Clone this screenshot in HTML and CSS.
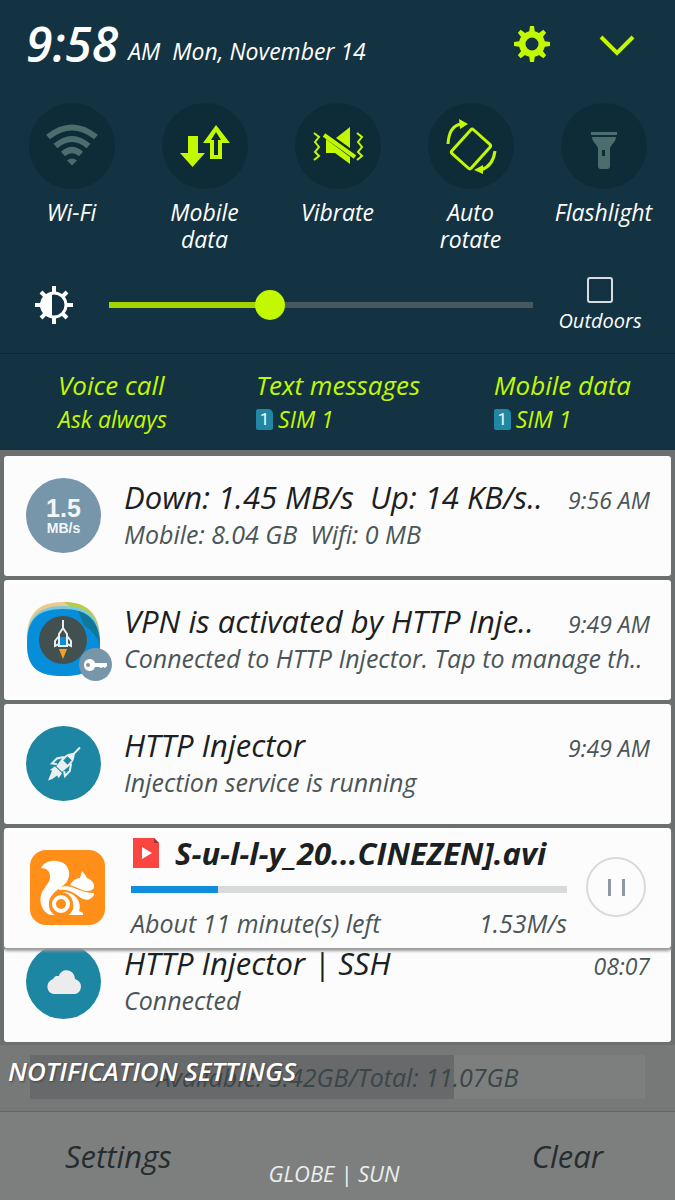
FILE: index.html
```html
<!DOCTYPE html>
<html lang="en">
<head>
    <meta charset="UTF-8">
    <meta name="viewport" content="width=device-width, initial-scale=1.0">
    <title>Notifications</title>
    <link rel="stylesheet" href="styles.css">
</head>
<body>

    <header class="panel">
        <div class="status">
            <span class="clock">9:58</span>
            <span class="date">AM&nbsp; Mon, November 14</span>
            <button class="icon-btn" aria-label="Settings">
                <svg width="38" height="38" viewBox="0 0 38 38" fill="#c2f900"><path fill-rule="evenodd" d="M19 6a13 13 0 1 1 0 26a13 13 0 1 1 0-26M19 12.500a6.500 6.500 0 1 0 0 13a6.500 6.500 0 1 0 0-13"/><path d="M16 8l1-7h4l1 7zM16 30l1 7h4l1-7zM8 16l-7 1v4l7 1zM30 16l7 1v4l-7 1z"/><path transform="rotate(45 19 19)" d="M16 8l1-7h4l1 7zM16 30l1 7h4l1-7zM8 16l-7 1v4l7 1zM30 16l7 1v4l-7 1z"/></svg>
            </button>
            <button class="icon-btn" aria-label="Expand">
                <svg width="36" height="22" viewBox="0 0 36 22" fill="none" stroke="#c2f900" stroke-width="4"><path d="M2 4l16 16L34 4"/></svg>
            </button>
        </div>

        <div class="toggles">
            <button class="toggle">
                <span class="disc"><svg width="54" height="44" viewBox="0 0 54 44" fill="none" stroke="#4b6d6e" stroke-width="6"><path d="M3 13Q27-6 51 13M10.500 22Q27 8 43.500 22M18 30Q27 22 36 30"/><path d="M22 36.500q5-4 10 0l-5 5z" fill="#4b6d6e" stroke="none"/></svg></span>
                Wi-Fi
            </button>
            <button class="toggle">
                <span class="disc"><svg width="52" height="44" viewBox="0 0 52 44" fill="#c2f900"><path d="M9 12h10v17h7L13.500 43 1 29h8z"/><path fill-rule="evenodd" d="M37 1l14 18h-8v16H31V19h-7zM37 8l-5 8h3v15h4V16h3z"/></svg></span>
                Mobile<br>data
            </button>
            <button class="toggle">
                <span class="disc"><svg width="54" height="40" viewBox="0 0 54 40" fill="none" stroke="#c2f900" stroke-width="2"><path d="M3 7l5 4-4 5 4 5-4 5 4 4-5 4M46 7l5 4-4 5 4 5-4 5 4 4-5 4"/><path d="M15 13l24 18v7L24 27h-9z" fill="#c2f900" stroke="none"/><path d="M39 1v21L25 12z" fill="#c2f900" stroke="none"/><path d="M13 9l31 22" stroke-width="4"/></svg></span>
                Vibrate
            </button>
            <button class="toggle">
                <span class="disc"><svg width="54" height="56" viewBox="0 0 54 56" fill="none" stroke="#c2f900" stroke-width="3"><rect x="14" y="15" width="26" height="32" rx="2" transform="rotate(42 27 31)"/><path d="M4 26Q5 8 17 6M51 33Q49 48 37 52"/><path d="M15 1l9 5-8 5zM39 47l-9 5 9 4z" fill="#c2f900" stroke="none"/></svg></span>
                Auto<br>rotate
            </button>
            <button class="toggle">
                <span class="disc"><svg class="torch" width="26" height="38" viewBox="0 0 26 38" fill="#4b6d6e"><path d="M0 0h26v3H0z"/><path fill-rule="evenodd" d="M1 5h24c0 5-6 8-6 12v17q0 3-3 3h-6q-3 0-3-3V17C7 13 1 10 1 5zM11 18v6h3v-6z"/></svg></span>
                Flashlight
            </button>
        </div>

        <div class="brightness">
            <svg width="38" height="38" viewBox="0 0 38 38" fill="none" stroke="#fff" stroke-width="3"><circle cx="19" cy="19" r="12"/><path d="M19 0v7M19 31v7M0 19h7M31 19h7M6 6l5 5M27 27l5 5M6 32l5-5M27 11l5-5" stroke-width="4"/><path d="M17 7a12 12 0 0 0 0 24z" fill="#fff" stroke="none"/></svg>
            <input class="slider" type="range" min="0" max="100" value="37" aria-label="Brightness">
            <label class="outdoors"><input type="checkbox">Outdoors</label>
        </div>

        <div class="sims">
            <button class="sim">Voice call<small>Ask always</small></button>
            <button class="sim">Text messages<small><i>1</i>SIM 1</small></button>
            <button class="sim">Mobile data<small><i>1</i>SIM 1</small></button>
        </div>
    </header>

    <main class="list">
        <article class="card">
            <div class="avatar speed"><b>1.5</b><span>MB/s</span></div>
            <div class="text">
                <div class="line"><h2>Down: 1.45 MB/s &nbsp;Up: 14 KB/s..</h2><time>9:56 AM</time></div>
                <p>Mobile: 8.04 GB &nbsp;Wifi: 0 MB</p>
            </div>
        </article>

        <article class="card">
            <div class="avatar vpn">
                <svg width="75" height="75" viewBox="0 0 75 75"><path d="M37 0C64 0 75 14 74 40c0 25-11 34-37 34S1 65 1 40C0 14 10 0 37 0" fill="#edc98c"/><path d="M38 0c20 0 32 10 35 28L51 10z" fill="#b9cc45"/><path d="M37 4C64 4 74 17 74 41c0 24-11 33-37 33S1 65 1 41C1 17 10 4 37 4" fill="#7cc9dc"/><path d="M37 7C63 7 73 19 74 42c0 23-11 32-37 32S1 65 1 42C1 19 10 7 37 7" fill="#078edb"/><path d="M52 9c17 5 22 19 22 34q-4-12-16-20z" fill="#176e7b" opacity=".7"/><circle cx="37" cy="38" r="24" fill="#42514f"/><path d="M37 18v9M33 44V32l4-6 4 6v12zM33 34l-4 5v5l4-2M41 34l4 5v5l-4-2" fill="none" stroke="#e9eef0" stroke-width="2"/><path d="M34 35h6v8h-6z" fill="#078edb"/><path d="M33 47h8l-4 10z" fill="#f5a21d"/></svg>
                <span class="badge"><svg width="24" height="12" viewBox="0 0 24 12" fill="#fff"><path fill-rule="evenodd" d="M5 0q5 0 6 4h12v3l-2 2-2-1-2 1-2-1h-4q-1 4-6 4-5-1-5-6t5-6M4 4a2 2 0 1 0 0 4 2 2 0 0 0 0-4"/></svg></span>
            </div>
            <div class="text">
                <div class="line"><h2>VPN is activated by HTTP Inje..</h2><time>9:49 AM</time></div>
                <p>Connected to HTTP Injector. Tap to manage th..</p>
            </div>
        </article>

        <article class="card">
            <div class="avatar teal">
                <!-- upright rocket, tilted to the right -->
                <svg width="38" height="38" viewBox="0 0 38 38"><g transform="rotate(44 19 19)" fill="#e9f0f2"><path d="M18-4h2v9h-2z"/><path fill-rule="evenodd" d="M19 3l4 6c2 5 1 11 0 17h-8c-1-6-2-12 0-17zM16 11v6h6v-6z"/><path d="M14 14l-4 6v7l4-3M24 14l4 6v7l-4-3" fill="none" stroke="#e9f0f2" stroke-width="2"/><path d="M14 27h10l1 6-3-1-1 6-2 4-2-5-2-5-2 1z"/></g></svg>
            </div>
            <div class="text">
                <div class="line"><h2>HTTP Injector</h2><time>9:49 AM</time></div>
                <p>Injection service is running</p>
            </div>
        </article>

        <article class="card download">
            <div class="avatar uc">
                <svg width="75" height="75" viewBox="0 0 75 75" fill="#fff"><path d="M11 18C14 12 21 10 27 11c9 1 13 8 12 15-1 6-5 9-9 12-6 4-11 9-11 16 0 5 2 9 6 11h-5C12 62 9 52 11 45c2-7 8-11 9-17 1-7-4-10-9-10z"/><path d="M40 35q4-7 10-7l2-7q3 3 5 7c5 2 8 6 7 10-2 3-6 4-12 2q-6-3-12-5z"/><path d="M29 38c11-6 20 5 35 5v2c-3 5-8 6-13 3-8-6-13-9-22-8z"/><path d="M22 47c9-9 23-5 27 5 1 4 1 7 0 9l4 2v2H39c3-3 5-6 4-11-1-8-11-13-21-7z"/><circle cx="31" cy="54" r="12" fill="#ff8f18"/><circle cx="31" cy="54" r="7" fill="none" stroke="#fff" stroke-width="4"/></svg>
            </div>
            <div class="transfer">
                <h2><svg width="26" height="30" viewBox="0 0 26 30"><path d="M0 0h21l5 5v25H0z" fill="#fb4540"/><path d="M21 0v5h5z" fill="#a33436"/><path d="M9 9v12l10-6z" fill="#fff"/></svg>S-u-l-l-y_20...CINEZEN].avi</h2>
                <progress max="100" value="20" aria-label="Download progress"></progress>
                <div class="line"><p>About 11 minute(s) left</p><p>1.53M/s</p></div>
            </div>
            <button class="pause" aria-label="Pause"></button>
        </article>

        <article class="card last">
            <div class="avatar teal">
                <svg width="34" height="24" viewBox="0 0 34 24" fill="#ececec"><path d="M7 24C-1 23-2 12 6 9 8 5 11 6 12 6 14-2 27-2 28 9c9 3 7 14 0 15z"/></svg>
            </div>
            <div class="text">
                <div class="line"><h2>HTTP Injector | SSH</h2><time>08:07</time></div>
                <p>Connected</p>
            </div>
        </article>
    </main>

    <footer class="footer">
        <div class="storage">
            <span>Available: 3.42GB/Total: 11.07GB</span>
        </div>
        <a class="notif-link" href="#">NOTIFICATION SETTINGS</a>
        <div class="actions">
            <button>Settings</button>
            <span class="carrier">GLOBE | SUN</span>
            <button>Clear</button>
        </div>
    </footer>

</body>
</html>
```

FILE: styles.css
```css
* {
    box-sizing: border-box;
}
body {
    margin: 0;
    min-height: 100vh;
    display: flex;
    flex-direction: column;
    background: #7d7f7f;
    font-family: "Choco cooky", "Open Sans", sans-serif;
    font-style: italic;
    color: #1b2022;
}
button {
    font: inherit;
    color: inherit;
    background: none;
    border: 0;
    padding: 0;
    cursor: pointer;
}
svg {
    display: block;
    flex: none;
    overflow: visible;
}
h2, p {
    margin: 0;
    white-space: nowrap;
}

/* quick settings panel */
.panel {
    background: #143342;
    color: #fff;
}
.status {
    display: flex;
    align-items: center;
    height: 88px;
    padding: 0 40px 0 26px;
}
.clock {
    font-size: 48px;
    font-weight: 600;
    line-height: 60px;
    margin-right: 10px;
}
.date {
    flex: 1;
    font-size: 23px;
    padding-top: 14px;
    white-space: nowrap;
}
.icon-btn {
    margin-left: 48px;
}
.toggles {
    display: flex;
    align-items: flex-start;
    justify-content: space-between;
    height: 172px;
    padding: 15px 19px;
}
.toggle {
    display: flex;
    flex-direction: column;
    align-items: center;
    width: 105px;
    font-size: 23px;
    line-height: 27px;
}
.disc {
    display: flex;
    flex: none;
    align-items: center;
    justify-content: center;
    width: 86px;
    height: 86px;
    margin-bottom: 10px;
    border-radius: 50%;
    background: #0e2b38;
}
.torch {
    margin-top: 10px;
}
.brightness {
    display: flex;
    align-items: center;
    height: 93px;
    padding: 0 28px 4px 35px;
}
.slider {
    flex: 1;
    min-width: 0;
    height: 30px;
    margin: 0 20px 0 36px;
    appearance: none;
    background: linear-gradient(#a5d500, #a5d500) left center / 37% 6px no-repeat,
        linear-gradient(#465961, #465961) center / 100% 6px no-repeat;
}
.slider::-webkit-slider-thumb {
    appearance: none;
    width: 30px;
    height: 30px;
    border-radius: 50%;
    background: #c2f900;
}
.outdoors {
    display: flex;
    flex-direction: column;
    align-items: center;
    width: 94px;
    font-size: 20px;
    line-height: 24px;
}
.outdoors input {
    appearance: none;
    width: 26px;
    height: 26px;
    margin: 0 0 6px;
    border: 2px solid #d7dde0;
    border-radius: 3px;
}
.sims {
    display: grid;
    grid-template-columns: 5fr 6fr auto;
    height: 97px;
    padding: 15px 44px 0 58px;
    border-top: 1px solid #0e2936;
    color: #c2f900;
}
.sim {
    display: flex;
    flex-direction: column;
    font-size: 26px;
    line-height: 32px;
    text-align: left;
    white-space: nowrap;
}
.sim small {
    display: flex;
    align-items: center;
    gap: 5px;
    font-size: 23px;
    line-height: 36px;
}
.sim i {
    width: 17px;
    height: 21px;
    border-radius: 2px 5px 2px 2px;
    background: #2287a3;
    color: #fff;
    font: 16px/21px Roboto, sans-serif;
    text-align: center;
}

/* notifications */
.list {
    display: flex;
    flex-direction: column;
    gap: 4px;
    padding: 6px 4px 3px;
    background: #6c6f70;
}
.card {
    display: flex;
    align-items: flex-start;
    height: 120px;
    padding: 22px 21px 0 22px;
    background: #fcfcfc;
    border-radius: 3px;
}
.avatar {
    position: relative;
    display: flex;
    flex: none;
    align-items: center;
    justify-content: center;
    width: 75px;
    height: 75px;
    border-radius: 50%;
}
.teal {
    background: #1d87a3;
}
.speed {
    flex-direction: column;
    background: #7796a9;
    color: #f2f6f8;
    font: bold 14px/16px "Liberation Sans", sans-serif;
}
.speed b {
    font-size: 25px;
    line-height: 24px;
}
.badge {
    position: absolute;
    left: 53px;
    top: 46px;
    display: flex;
    align-items: center;
    justify-content: center;
    width: 33px;
    height: 33px;
    border-radius: 50%;
    background: #7796a9;
}
.text {
    flex: 1;
    min-width: 0;
    margin-left: 23px;
}
.line {
    display: flex;
    align-items: baseline;
    justify-content: space-between;
}
.card h2 {
    font-size: 31px;
    font-weight: normal;
    line-height: 38px;
}
.card p {
    font-size: 25px;
    line-height: 34px;
    color: #4a5557;
}
.card time {
    font-size: 23px;
    line-height: 34px;
    color: #4a5557;
}
.card.download {
    position: relative;
    z-index: 1;
    padding: 7px 25px 0 26px;
    box-shadow: 0 3px 3px #999;
}
.uc {
    margin-top: 15px;
    border-radius: 16px;
    background: #ff8f18;
}
.transfer {
    flex: 1;
    min-width: 0;
    margin: 0 19px 0 26px;
}
.transfer h2 {
    display: flex;
    align-items: center;
    gap: 16px;
    padding-left: 2px;
    font-weight: bold;
    line-height: 36px;
}
.transfer progress {
    display: block;
    width: 100%;
    height: 7px;
    margin: 15px 0 13px;
    appearance: none;
    border: 0;
    background: #d9dbdb;
}
.transfer progress::-webkit-progress-bar {
    background: #d9dbdb;
}
.transfer progress::-webkit-progress-value {
    background: #108edb;
}
.pause {
    width: 60px;
    height: 60px;
    margin-top: 22px;
    border: 2px solid #d9dbdb;
    border-radius: 50%;
    background: linear-gradient(90deg, #8d999e 3px, transparent 3px 14px, #8d999e 14px) center / 17px 17px no-repeat;
}
.card.last {
    height: 94px;
    margin-top: -4px;
    padding-top: 0;
}
.last .avatar,
.last .text {
    margin-top: -4px;
}

/* footer */
.footer {
    flex: 1;
    position: relative;
    display: flex;
    flex-direction: column;
    color: #262d2f;
}
.storage {
    height: 67px;
    padding: 10px 30px 12px;
    border-bottom: 1px solid #626565;
    background: #777979;
}
.storage span {
    display: block;
    height: 44px;
    background: linear-gradient(90deg, #67696a 69%, #7d7f7f 69%);
    color: #3b4648;
    font-size: 25px;
    line-height: 44px;
    text-align: center;
}
.notif-link {
    position: absolute;
    left: 8px;
    top: 8px;
    color: #fff;
    font-size: 26px;
    font-weight: 600;
    line-height: 36px;
    text-decoration: none;
    text-shadow: 1px 1px 2px #444;
}
.actions {
    flex: 1;
    display: grid;
    grid-template-columns: 1fr auto 1fr;
    align-items: center;
    padding: 0 72px 0 65px;
    font-size: 31px;
}
.actions button:first-child {
    justify-self: start;
}
.actions button:last-child {
    justify-self: end;
}
.carrier {
    padding-top: 34px;
    color: #eceeee;
    font-size: 22px;
}
```
